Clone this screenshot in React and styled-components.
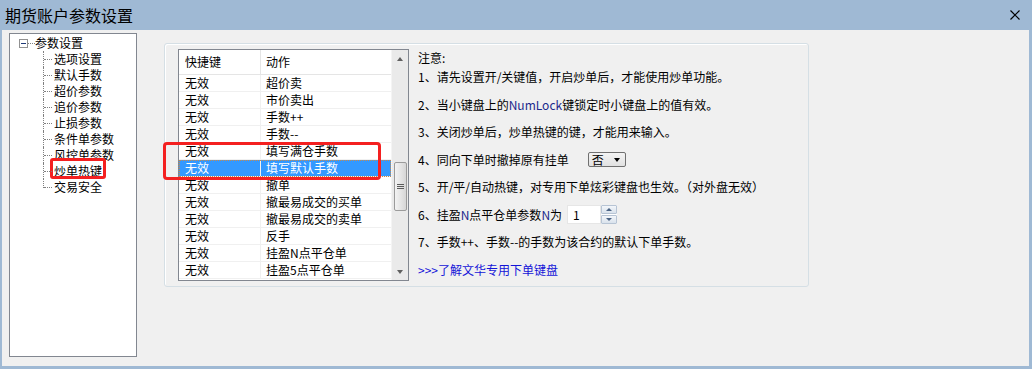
import React from 'react';
import styled, { createGlobalStyle } from 'styled-components';

const FONT = `"Noto Sans CJK SC", "Noto Sans", "Liberation Sans", sans-serif`;

const GlobalStyle = createGlobalStyle`
  html, body { margin: 0; padding: 0; }
  body {
    font-family: ${FONT};
    font-size: 12px;
    color: #000;
    background: #f0f0f0;
  }
  * { box-sizing: border-box; }
`;

const Window = styled.div`
  width: 1032px;
  height: 369px;
  background: #9fb9d4;
  display: flex;
  flex-direction: column;
  overflow: hidden;
`;

const TitleBar = styled.div`
  height: 30px;
  flex: none;
  display: flex;
  align-items: center;
  justify-content: space-between;
  padding: 0 12px 0 5px;
  font-size: 16px;
  color: #000;
`;

const CloseButton = styled.div`
  width: 10px;
  height: 10px;
  display: flex;
  svg { display: block; }
`;

const Body = styled.div`
  flex: 1;
  margin: 0 3px 3px 2px;
  background: #f0f0f0;
  display: flex;
  align-items: flex-start;
  padding: 3px 0 0 7px;
`;

const Tree = styled.div`
  width: 128px;
  height: 324px;
  flex: none;
  background: #fff;
  border: 1px solid #828790;
  padding-top: 1px;
`;

const RootRow = styled.div`
  height: 16px;
  display: flex;
  align-items: center;
  padding-left: 9px;
  line-height: 16px;
`;

const Expander = styled.span`
  width: 9px;
  height: 9px;
  border: 1px solid #919191;
  background: #fff;
  display: flex;
  align-items: center;
  justify-content: center;
  &::before {
    content: '';
    width: 5px;
    height: 1px;
    background: #1f3a78;
  }
`;

const Connector = styled.span`
  width: 7px;
  border-top: 1px dotted #808080;
  margin-top: 1px;
`;

const ChildList = styled.ul`
  list-style: none;
  margin: 0 0 0 33px;
  padding: 0;
`;

const ChildItem = styled.li`
  position: relative;
  height: 16px;
  line-height: 16px;
  padding-left: 11px;
  white-space: nowrap;
  &::before {
    content: '';
    position: absolute;
    left: 0;
    top: 0;
    height: ${p => (p.$last ? '9px' : '16px')};
    border-left: 1px dotted #808080;
  }
  &::after {
    content: '';
    position: absolute;
    left: 1px;
    top: 8px;
    width: 8px;
    border-top: 1px dotted #808080;
  }
`;

const Marked = styled.span`
  position: relative;
  display: inline-block;
  height: 16px;
  line-height: 16px;
  &::after {
    content: '';
    position: absolute;
    left: -4px;
    right: -4px;
    top: -5px;
    bottom: 0;
    border: 3px solid #f42020;
    border-radius: 3px;
  }
`;

const GroupBox = styled.div`
  position: relative;
  width: 645px;
  height: 244px;
  flex: none;
  margin: 10px 0 0 27px;
  border: 1px solid #d5dfe5;
  border-radius: 3px;
  box-shadow: inset 1px 1px 0 #fff;
  display: flex;
  align-items: flex-start;
  padding: 5px 0 0 13px;
`;

const RedFrame = styled.div`
  position: absolute;
  left: -2px;
  top: 98px;
  width: 218px;
  height: 38px;
  border: 3px solid #f42020;
  border-radius: 4px;
  pointer-events: none;
`;

const ListView = styled.div`
  width: 231px;
  height: 232px;
  flex: none;
  border: 1px solid #828790;
  background: #fff;
  display: flex;
  overflow: hidden;
`;

const Table = styled.div`
  flex: 1;
  display: flex;
  flex-direction: column;
  overflow: hidden;
`;

const HeaderRow = styled.div`
  height: 25px;
  flex: none;
  display: flex;
  border-bottom: 1px solid #e5e5e5;
`;

const HeaderCell = styled.div`
  width: ${p => (p.$first ? '82px' : 'auto')};
  flex: ${p => (p.$first ? 'none' : '1')};
  border-right: ${p => (p.$first ? '1px solid #e5e5e5' : 'none')};
  padding-left: ${p => (p.$first ? '6px' : '5px')};
  line-height: 24px;
`;

const Row = styled.div`
  height: 17px;
  flex: none;
  display: flex;
  border-bottom: 1px solid #f0f0f0;
  background: ${p => (p.$selected ? '#3399ff' : '#fff')};
  color: ${p => (p.$selected ? '#fff' : '#000')};
  outline: ${p => (p.$selected ? '1px dotted #c8894a' : 'none')};
  outline-offset: -1px;
`;

const Cell = styled.div`
  width: ${p => (p.$first ? '82px' : 'auto')};
  flex: ${p => (p.$first ? 'none' : '1')};
  border-right: ${p => (p.$first ? '1px solid #f0f0f0' : 'none')};
  padding-left: ${p => (p.$first ? '6px' : '5px')};
  line-height: 16px;
  white-space: nowrap;
`;

const ScrollBar = styled.div`
  width: 17px;
  flex: none;
  background: #eaeaea;
  border-left: 1px solid #f4f4f4;
  display: flex;
  flex-direction: column;
  align-items: center;
`;

const ArrowBtn = styled.div`
  height: 17px;
  width: 100%;
  flex: none;
  display: flex;
  align-items: center;
  justify-content: center;
  &::before {
    content: '';
    border-left: 3.5px solid transparent;
    border-right: 3.5px solid transparent;
    ${p => (p.$down ? 'border-top: 4px solid #606060;' : 'border-bottom: 4px solid #606060;')}
  }
`;

const Track = styled.div`
  flex: 1;
  width: 100%;
  display: flex;
  justify-content: center;
`;

const Thumb = styled.div`
  width: 13px;
  height: 49px;
  margin-top: 95px;
  border: 1px solid #9b9b9b;
  border-radius: 2px;
  background: linear-gradient(90deg, #f3f3f3, #e2e2e2 60%, #d6d6d6);
  display: flex;
  flex-direction: column;
  align-items: center;
  justify-content: center;
  gap: 1px;
`;

const Grip = styled.span`
  width: 7px;
  height: 1px;
  background: #5a5a5a;
`;

const Notes = styled.div`
  margin-left: 9px;
  display: flex;
  flex-direction: column;
`;

const Heading = styled.div`
  line-height: 18px;
  height: 18px;
`;

const NoteList = styled.div`
  display: flex;
  flex-direction: column;
  gap: 7.5px;
`;

const Note = styled.div`
  height: 20px;
  line-height: 20px;
  display: flex;
  align-items: center;
  white-space: nowrap;
  color: ${p => (p.$link ? '#1414d8' : '#000')};
`;

const Latin = styled.span`
  color: #1c2a8c;
`;

const Select = styled.div`
  margin-left: 19px;
  width: 38px;
  height: 15px;
  border: 1px solid #707070;
  border-radius: 2px;
  background: linear-gradient(#f4f4f4, #e1e1e1);
  display: flex;
  align-items: center;
  justify-content: space-between;
  padding: 0 5px 0 3px;
  line-height: 13px;
  &::after {
    content: '';
    border-left: 3.5px solid transparent;
    border-right: 3.5px solid transparent;
    border-top: 4px solid #000;
  }
`;

const Spinner = styled.div`
  margin-left: 5px;
  width: 50px;
  height: 19px;
  display: flex;
`;

const SpinInput = styled.div`
  flex: 1;
  background: #fff;
  border: 1px solid #e6e6e6;
  padding-left: 5px;
  line-height: 17px;
`;

const SpinButtons = styled.div`
  width: 16px;
  display: flex;
  flex-direction: column;
  gap: 1px;
  background: #fff;
`;

const SpinBtn = styled.div`
  flex: 1;
  border: 1px solid #b7c4d4;
  border-radius: 1px;
  background: linear-gradient(#f3f6fa, #d9e2ec);
  display: flex;
  align-items: center;
  justify-content: center;
  &::before {
    content: '';
    border-left: 3px solid transparent;
    border-right: 3px solid transparent;
    ${p => (p.$down ? 'border-top: 3px solid #4a6384;' : 'border-bottom: 3px solid #4a6384;')}
  }
`;

const treeChildren = ['选项设置', '默认手数', '超价参数', '追价参数', '止损参数', '条件单参数', '风控单参数', '炒单热键', '交易安全'];

const actions = ['超价卖', '市价卖出', '手数++', '手数--', '填写满仓手数', '填写默认手数', '撤单', '撤最易成交的买单', '撤最易成交的卖单', '反手', '挂盈N点平仓单', '挂盈5点平仓单'];

export default function App() {
  return (
    <>
      <GlobalStyle />
      <Window>
        <TitleBar>
          <span>期货账户参数设置</span>
          <CloseButton>
            <svg width="10" height="10" viewBox="0 0 10 10">
              <path d="M0.5 0.5 L9.5 9.5 M9.5 0.5 L0.5 9.5" stroke="#000" strokeWidth="1.2" fill="none" />
            </svg>
          </CloseButton>
        </TitleBar>
        <Body>
          <Tree>
            <RootRow>
              <Expander />
              <Connector />
              <span>参数设置</span>
            </RootRow>
            <ChildList>
              {treeChildren.map((t, i) => (
                <ChildItem key={t} $last={i === treeChildren.length - 1}>
                  {t === '炒单热键' ? <Marked>{t}</Marked> : t}
                </ChildItem>
              ))}
            </ChildList>
          </Tree>
          <GroupBox>
            <ListView>
              <Table>
                <HeaderRow>
                  <HeaderCell $first>快捷键</HeaderCell>
                  <HeaderCell>动作</HeaderCell>
                </HeaderRow>
                {actions.map((a, i) => (
                  <Row key={a} $selected={i === 5}>
                    <Cell $first>无效</Cell>
                    <Cell>{a}</Cell>
                  </Row>
                ))}
              </Table>
              <ScrollBar>
                <ArrowBtn />
                <Track>
                  <Thumb>
                    <Grip />
                    <Grip />
                    <Grip />
                  </Thumb>
                </Track>
                <ArrowBtn $down />
              </ScrollBar>
            </ListView>
            <Notes>
              <Heading>注意:</Heading>
              <NoteList>
                <Note>1、请先设置开/关键值，开启炒单后，才能使用炒单功能。</Note>
                <Note>2、当小键盘上的<Latin>NumLock</Latin>键锁定时小键盘上的值有效。</Note>
                <Note>3、关闭炒单后，炒单热键的键，才能用来输入。</Note>
                <Note>
                  4、同向下单时撤掉原有挂单
                  <Select>否</Select>
                </Note>
                <Note>5、开/平/自动热键，对专用下单炫彩键盘也生效。（对外盘无效）</Note>
                <Note>
                  6、挂盈<Latin>N</Latin>点平仓单参数<Latin>N</Latin>为
                  <Spinner>
                    <SpinInput>1</SpinInput>
                    <SpinButtons>
                      <SpinBtn />
                      <SpinBtn $down />
                    </SpinButtons>
                  </Spinner>
                </Note>
                <Note>7、手数++、手数--的手数为该合约的默认下单手数。</Note>
                <Note $link>&gt;&gt;&gt;了解文华专用下单键盘</Note>
              </NoteList>
            </Notes>
            <RedFrame />
          </GroupBox>
        </Body>
      </Window>
    </>
  );
}
